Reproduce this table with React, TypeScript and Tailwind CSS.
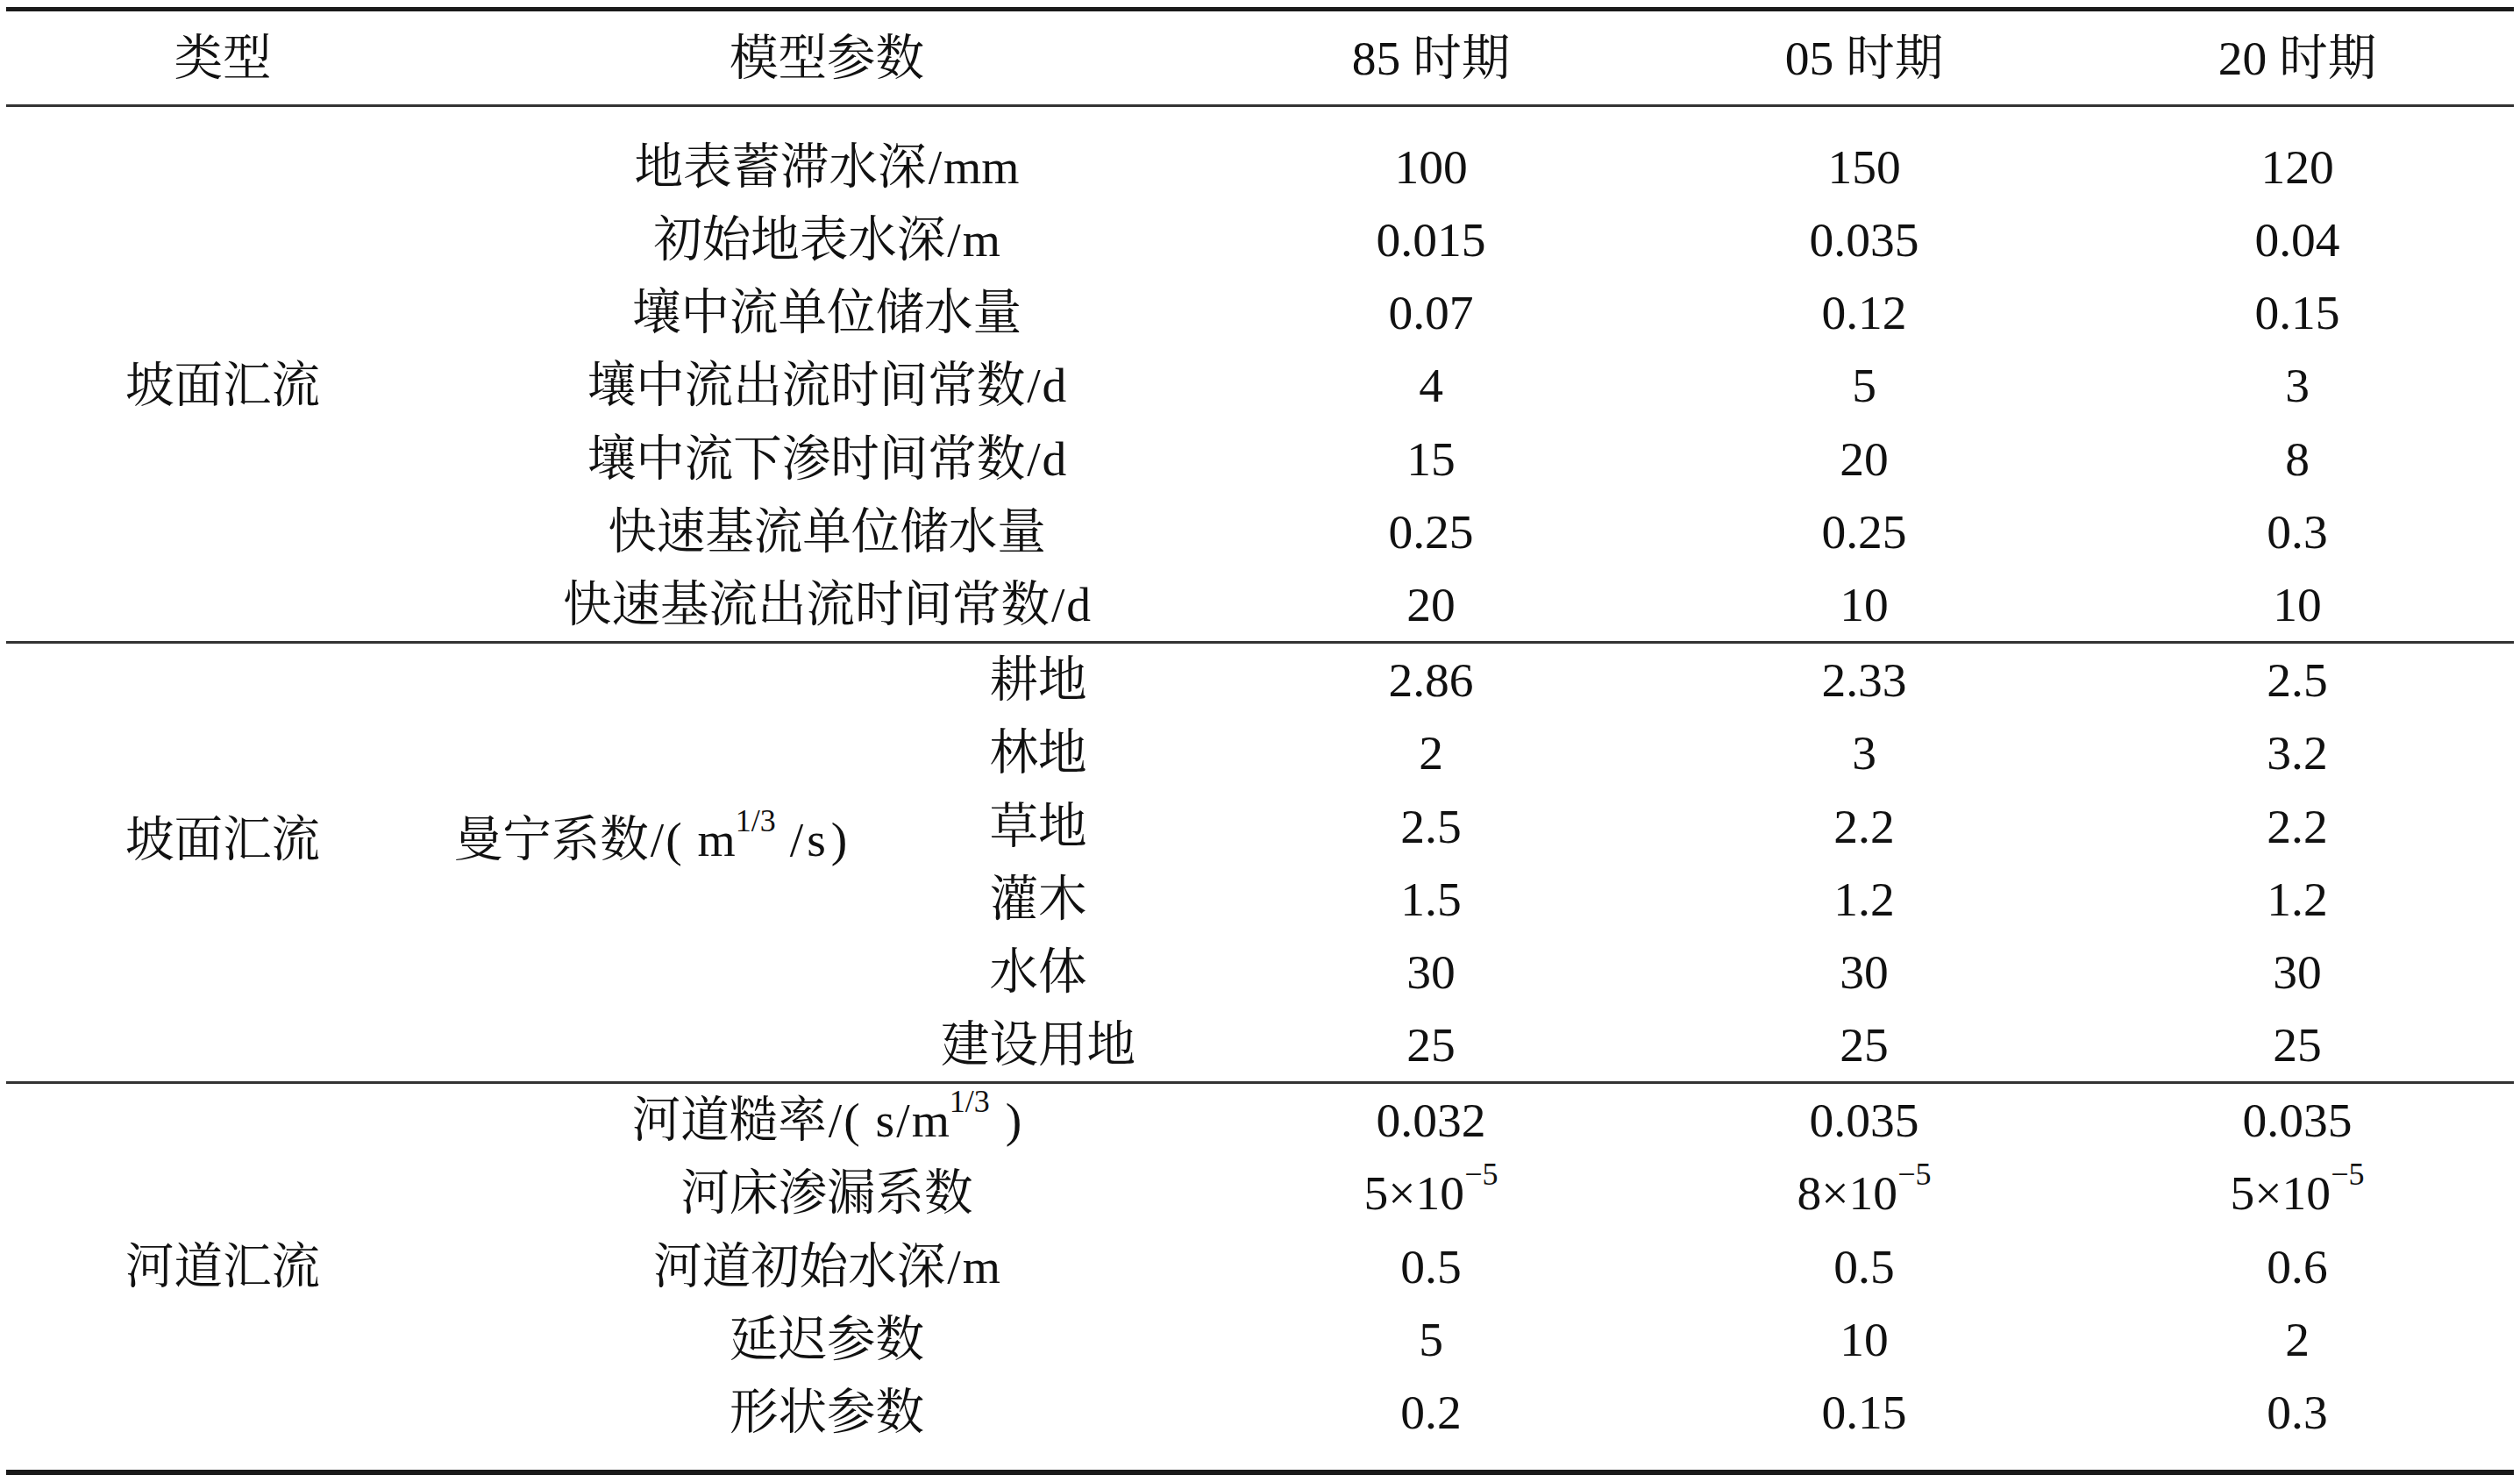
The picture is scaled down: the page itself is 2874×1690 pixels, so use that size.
import React from "react";

const FONT = '"Liberation Serif", "Noto Serif CJK SC", "Noto Sans CJK SC", serif';

function Sup({ children }: { children: React.ReactNode }) {
  return <span className="relative -top-[28px] text-[36px] leading-none">{children}</span>;
}

function Row({ label, v }: { label: React.ReactNode; v: React.ReactNode[] }) {
  return (
    <div className="grid h-[83.2px] grid-cols-[494px_884px_494px_494px_1fr] items-center">
      <div />
      <div className="text-center">{label}</div>
      {v.map((x, i) => (
        <div key={i} className="text-center">
          {x}
        </div>
      ))}
    </div>
  );
}

const Slash = () => <span className="mx-[2px]">/</span>;

const sec1: [React.ReactNode, React.ReactNode[]][] = [
  [<span>地表蓄滞水深<Slash />mm</span>, ["100", "150", "120"]],
  [<span>初始地表水深<Slash />m</span>, ["0.015", "0.035", "0.04"]],
  ["壤中流单位储水量", ["0.07", "0.12", "0.15"]],
  [<span>壤中流出流时间常数<Slash />d</span>, ["4", "5", "3"]],
  [<span>壤中流下渗时间常数<Slash />d</span>, ["15", "20", "8"]],
  ["快速基流单位储水量", ["0.25", "0.25", "0.3"]],
  [<span>快速基流出流时间常数<Slash />d</span>, ["20", "10", "10"]],
];

const sec2: [string, string[]][] = [
  ["耕地", ["2.86", "2.33", "2.5"]],
  ["林地", ["2", "3", "3.2"]],
  ["草地", ["2.5", "2.2", "2.2"]],
  ["灌木", ["1.5", "1.2", "1.2"]],
  ["水体", ["30", "30", "30"]],
  ["建设用地", ["25", "25", "25"]],
];

const exp = (m: string) => (
  <span>
    {m}×10<Sup>−5</Sup>
  </span>
);

const sec3: [React.ReactNode, React.ReactNode[]][] = [
  [
    <span>
      河道糙率<Slash />(<span className="ml-[18px]">s</span><Slash />m
      <Sup>1/3</Sup>
      <span className="ml-[18px]">)</span>
    </span>,
    ["0.032", "0.035", "0.035"],
  ],
  ["河床渗漏系数", [exp("5"), exp("8"), exp("5")]],
  [<span>河道初始水深<Slash />m</span>, ["0.5", "0.5", "0.6"]],
  ["延迟参数", ["5", "10", "2"]],
  ["形状参数", ["0.2", "0.15", "0.3"]],
];

export default function App() {
  return (
    <div
      className="h-[1690px] w-[2874px] bg-white px-[7px] pt-[8px] text-[55.5px] leading-none text-[#111]"
      style={{ fontFamily: FONT }}
    >
      <div className="h-[5px] bg-[#1a1a1a]" />
      <div className="grid h-[106px] grid-cols-[494px_884px_494px_494px_1fr] items-center pt-[2px] text-center">
        <div>类型</div>
        <div>模型参数</div>
        <div>85 时期</div>
        <div>05 时期</div>
        <div>20 时期</div>
      </div>
      <div className="h-[3px] bg-[#333]" />

      {/* section 1 */}
      <div className="relative pt-[27px]">
        <div className="absolute bottom-0 left-0 top-[27px] flex w-[494px] items-center justify-center">坡面汇流</div>
        {sec1.map(([l, v], i) => (
          <Row key={i} label={l} v={v} />
        ))}
      </div>
      <div className="h-[3px] bg-[#333]" />

      {/* section 2 */}
      <div className="grid grid-cols-[494px_482px_402px_494px_494px_1fr]">
        <div className="row-span-6 flex items-center justify-center pb-[52px]">坡面汇流</div>
        <div className="row-span-6 flex items-center justify-center pb-[52px]">
          <span>
            曼宁系数<Slash />(<span className="ml-[18px]">m</span>
            <Sup>1/3</Sup>
            <span className="ml-[16px]">/</span>
            <span className="ml-[4px]">s</span>
            <span className="ml-[6px]">)</span>
          </span>
        </div>
        {sec2.map(([l, v], i) => (
          <React.Fragment key={i}>
            <div className="flex h-[83.2px] items-center justify-center">{l}</div>
            {v.map((x, j) => (
              <div key={j} className="flex h-[83.2px] items-center justify-center">
                {x}
              </div>
            ))}
          </React.Fragment>
        ))}
      </div>
      <div className="h-[3px] bg-[#333]" />

      {/* section 3 */}
      <div className="relative pb-[24px]">
        <div className="absolute bottom-[24px] left-0 top-0 flex w-[494px] items-center justify-center">河道汇流</div>
        {sec3.map(([l, v], i) => (
          <Row key={i} label={l} v={v} />
        ))}
      </div>
      <div className="h-[6px] bg-[#1a1a1a]" />
    </div>
  );
}
